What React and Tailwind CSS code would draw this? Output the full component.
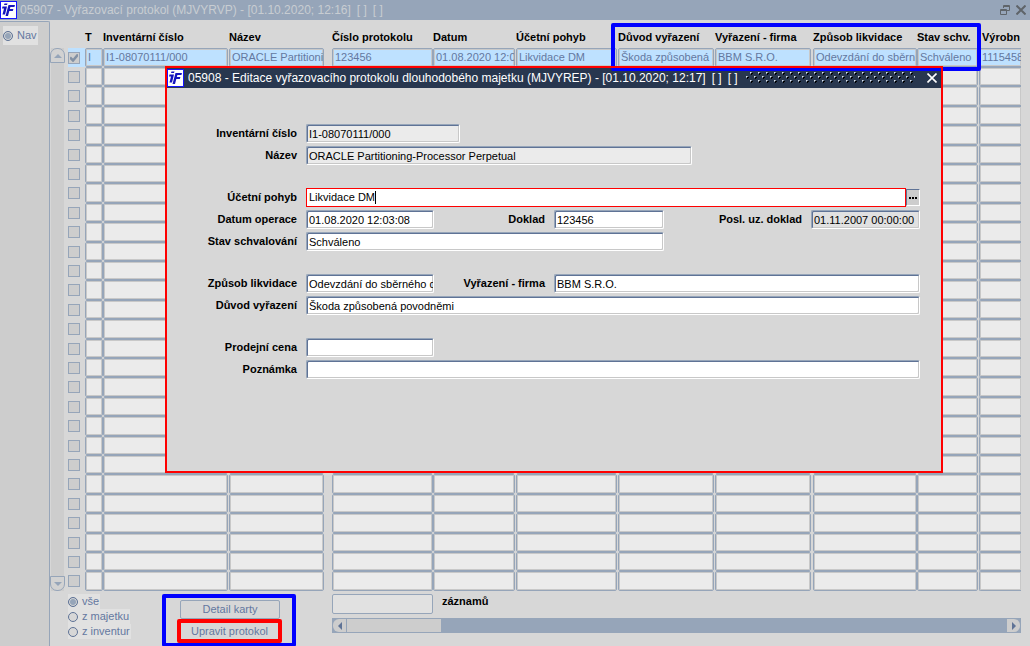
import clsx from "clsx";

const COLUMNS = [
  { key: "t", title: "T", value: "I", col: "w-[18px]", pad: "" },
  { key: "inv", title: "Inventární číslo", value: "I1-08070111/000", col: "w-[126px]", pad: "pr-px" },
  { key: "name", title: "Název", value: "ORACLE Partitionin", col: "w-[103px]", pad: "pr-2" },
  { key: "protocol", title: "Číslo protokolu", value: "123456", col: "w-[101px]", pad: "" },
  { key: "date", title: "Datum", value: "01.08.2020 12:0", col: "w-[83px]", pad: "pr-px" },
  { key: "move", title: "Účetní pohyb", value: "Likvidace DM", col: "w-[102px]", pad: "pr-px" },
  { key: "reason", title: "Důvod vyřazení", value: "Škoda způsobená", col: "w-[97px]", pad: "pr-px" },
  { key: "company", title: "Vyřazení - firma", value: "BBM S.R.O.", col: "w-[98px]", pad: "pr-0.5" },
  { key: "method", title: "Způsob likvidace", value: "Odevzdání do sběrn", col: "w-[104px]", pad: "" },
  { key: "state", title: "Stav schv.", value: "Schváleno", col: "w-[62px]", pad: "pr-px" },
  { key: "serial", title: "Výrobn", value: "1115458", col: "", pad: "" },
];

const ROWS = Array.from({ length: 28 }, (_, i) => i);
const FILTERS = ["vše", "z majetku", "z inventur"];

function Logo() {
  return (
    <svg viewBox="0 0 17 18" className="h-[18px] w-[17px] shrink-0" aria-hidden="true">
      <rect x="0.5" y="0.5" width="16" height="17" fill="#fff" stroke="#1414ff" />
      <path d="M2.5 5.5H7L5 13.5H2.5L4 7.5H2zM4.5 2.5h3L7 4H4z" fill="#1414be" />
      <path d="M8.5 4H15l-.6 2h-4l-.6 2h3.6l-.6 2H9.3l-1.3 5H5.5z" fill="#1414be" />
    </svg>
  );
}

function TitleBar() {
  return (
    <header className="flex h-5 items-center bg-[#96a5b9] pr-1 text-[#c8cdd2]">
      <Logo />
      <h1 className="ml-[3px] flex-1 text-xs">
        05907 - Vyřazovací protokol (MJVYRVP) - [01.10.2020; 12:16]
        <span className="ml-1.5">[ ]</span>
        <span className="ml-1.5">[ ]</span>
      </h1>
      <button aria-label="Obnovit" className="mr-[6px]">
        <svg viewBox="0 0 10 10" className="size-[10px]" fill="none" stroke="#5f6469">
          <path d="M3.5 3V.5h6v5H7M3 1.5h7M.5 4.5h6v5h-6zM0 5.5h7" />
        </svg>
      </button>
      <button aria-label="Zavřít">
        <svg viewBox="0 0 10 10" className="size-[10px]" stroke="#5f6469" strokeWidth="2">
          <path d="M.5.5l9 9M9.5.5l-9 9" />
        </svg>
      </button>
    </header>
  );
}

function Radio({ name, label, checked, className }) {
  return (
    <label className={clsx("flex w-fit items-center gap-1 bg-[#e1e1e1] pr-px text-[#6478a0]", className)}>
      <input
        type="radio"
        name={name}
        defaultChecked={checked}
        className="size-[10px] appearance-none rounded-full border border-[#5f7396] bg-[#d7d7d7] checked:bg-[#96a5b9] checked:shadow-[inset_0_0_0_1px_#d7d7d7]"
      />
      {label}
    </label>
  );
}

function VerticalScroll() {
  return (
    <div className="mt-[27px] flex h-[543px] w-[15px] shrink-0 flex-col border-x border-transparent bg-[#cdcdcd] bg-clip-padding">
      <button
        aria-label="Nahoru"
        className="-mx-px flex h-[15px] items-center justify-center rounded-t-[7px] border border-[#96a5b9] bg-[#d2d2d2]"
      >
        <svg viewBox="0 0 8 4" className="h-1 w-2" fill="#96a5b9">
          <path d="M0 4l4-4 4 4z" />
        </svg>
      </button>
      <div className="flex-1" />
      <button
        aria-label="Dolů"
        className="-mx-px flex h-[15px] items-center justify-center rounded-b-[7px] border border-[#96a5b9] bg-[#d2d2d2]"
      >
        <svg viewBox="0 0 8 4" className="h-1 w-2" fill="#96a5b9">
          <path d="M0 0l4 4 4-4z" />
        </svg>
      </button>
    </div>
  );
}

function HorizontalScroll() {
  return (
    <div className="flex h-[15px] border border-[#96a5b9] bg-[#96a5b9]">
      <button aria-label="Vlevo" className="flex w-[13px] items-center justify-center rounded-l-[6px] bg-[#cdcdcd]">
        <svg viewBox="0 0 4 8" className="h-2 w-1" fill="#5f7396">
          <path d="M4 0v8L0 4z" />
        </svg>
      </button>
      <div className="ml-px w-[94px] bg-[#cdcdcd]" />
      <div className="flex-1" />
      <button aria-label="Vpravo" className="flex w-[13px] items-center justify-center rounded-r-[6px] bg-[#cdcdcd]">
        <svg viewBox="0 0 4 8" className="h-2 w-1" fill="#5f7396">
          <path d="M0 0v8l4-4z" />
        </svg>
      </button>
    </div>
  );
}

function RecordTable() {
  return (
    <table className="w-full table-fixed border-collapse">
      <colgroup>
        <col className="w-[20px]" />
        {COLUMNS.map((c) => (
          <col key={c.key} className={c.col} />
        ))}
      </colgroup>
      <thead>
        <tr className="h-[27px]">
          <th className="p-0" aria-label="Výběr" />
          {COLUMNS.map((c) => (
            <th key={c.key} className="p-0 pt-1.5 text-left align-middle font-bold whitespace-nowrap">
              <span className={clsx(c.key === "serial" && "ml-[3px]")}>{c.title}</span>
            </th>
          ))}
        </tr>
      </thead>
      <tbody>
        {ROWS.map((i) => {
          // 19px and 20px rows alternate so that the grid keeps its 19.4px pitch
          const height = i % 5 === 2 || i % 5 === 4 ? "h-5" : "h-[19px]";
          return (
            <tr key={i} className={height}>
              <td className="p-0 pl-[3px]">
                <div className={clsx("flex items-center", height, i === 0 && "bg-[#bee1ff]")}>
                  <input
                    type="checkbox"
                    aria-label={`Záznam ${i + 1}`}
                    defaultChecked={i === 0}
                    className="size-3 appearance-none border border-[#96a5b9] bg-[#cdcdcd]"
                  />
                  {i === 0 && (
                    <svg
                      viewBox="0 0 8 8"
                      className="pointer-events-none -ml-[10px] size-2"
                      fill="none"
                      stroke="#8291a5"
                      strokeWidth="2.5"
                    >
                      <path d="M0 3.5l3 3L8 .5" />
                    </svg>
                  )}
                </div>
              </td>
              {COLUMNS.map((c) => (
                <td key={c.key} className={clsx("p-0", c.pad)}>
                  <div
                    className={clsx(
                      "overflow-hidden rounded-[2px] border border-[#96a5b9] pl-[2px] leading-[17px] whitespace-nowrap text-[#6478a0] shadow-[inset_0_0_0_1px_#c8c8c8]",
                      height,
                      i === 0 ? "bg-[#bee1ff]" : "bg-[#ebebeb]",
                      c.key === "serial" && "rounded-r-none border-r-0",
                    )}
                  >
                    {i === 0 && c.value}
                  </div>
                </td>
              ))}
            </tr>
          );
        })}
      </tbody>
    </table>
  );
}

function Field({ id, label, value, labelWidth = "w-[122px]", width = "w-[128px]", bg = "bg-white" }) {
  return (
    <>
      <label htmlFor={id} className={clsx("shrink-0 pr-[9px] text-right font-bold", labelWidth)}>
        {label}
      </label>
      <input
        id={id}
        defaultValue={value}
        className={clsx(
          "h-[19px] min-w-0 rounded-[2px] border border-t-[#96a5b9] border-r-white border-b-white border-l-[#96a5b9] pl-[2px] shadow-[inset_1px_1px_0_#5f7396,inset_-1px_-1px_0_#c8c8c8] outline-none",
          width,
          bg,
        )}
      />
    </>
  );
}

function Row({ children }) {
  return <div className="flex h-[19px] items-center">{children}</div>;
}

function EditDialog() {
  return (
    <section
      role="dialog"
      aria-labelledby="dialog-title"
      className="absolute top-[66px] left-[165px] z-10 w-[778px] bg-[#d7d7d7] p-0.5"
    >
      <div className="flex h-5 items-center bg-[#28374f] pr-1 text-white">
        <Logo />
        <h2 id="dialog-title" className="ml-1 shrink-0 text-xs">
          05908 - Editace vyřazovacího protokolu dlouhodobého majetku (MJVYREP) - [01.10.2020; 12:17]
          <span className="ml-1.5">[ ]</span>
          <span className="ml-1.5">[ ]</span>
        </h2>
        <svg className="mx-2 h-3 min-w-0 flex-1" aria-hidden="true">
          <defs>
            <pattern id="grip" width="8" height="8" patternUnits="userSpaceOnUse">
              <path d="M4 0h2v1h-1v1h-1zM0 4h2v1h-1v1h-1z" fill="#8c9baf" />
              <path d="M4 0h1v1h-1zM0 4h1v1h-1z" fill="#dce1e6" />
              <path d="M5 1h2v1h-1v1h-1zM1 5h2v1h-1v1h-1z" fill="#000" />
            </pattern>
          </defs>
          <rect width="100%" height="100%" fill="url(#grip)" />
        </svg>
        <button aria-label="Zavřít" className="ml-1">
          <svg viewBox="0 0 10 10" className="size-[10px]" stroke="#fff" strokeWidth="1.6">
            <path d="M.5.5l9 9M9.5.5l-9 9" />
          </svg>
        </button>
      </div>
      <form className="flex flex-col gap-[23px] pt-9 pr-[21px] pb-[92px] pl-[17px]">
        <div className="flex flex-col gap-[3px]">
          <Row>
            <Field id="inv" label="Inventární číslo" value="I1-08070111/000" width="w-[154px]" bg="bg-[#ebebeb]" />
          </Row>
          <Row>
            <Field id="name" label="Název" value="ORACLE Partitioning-Processor Perpetual" width="w-[386px]" bg="bg-[#ebebeb]" />
          </Row>
        </div>
        <div className="flex flex-col gap-[3px]">
          <Row>
            <label htmlFor="move" className="w-[122px] shrink-0 pr-[9px] text-right font-bold">
              Účetní pohyb
            </label>
            <div className="flex h-[19px] min-w-0 flex-1 items-center border border-[#ff0000] bg-white pl-[2px]">
              <input id="move" defaultValue="Likvidace DM" className="field-sizing-content outline-none" />
              <span className="h-[13px] w-px bg-black" />
            </div>
            <button
              type="button"
              aria-label="Seznam hodnot"
              className="flex h-[17px] w-[14px] items-center justify-center gap-px border border-t-[#5f7396] border-r-white border-b-white border-l-[#5f7396] bg-[#cdcdcd]"
            >
              <span className="size-0.5 bg-black" />
              <span className="size-0.5 bg-black" />
              <span className="size-0.5 bg-black" />
            </button>
          </Row>
          <Row>
            <Field id="date" label="Datum operace" value="01.08.2020 12:03:08" />
            <Field id="doc" label="Doklad" value="123456" labelWidth="w-[120px]" width="w-[110px]" />
            <Field id="last" label="Posl. uz. doklad" value="01.11.2007 00:00:00" labelWidth="w-[147px]" width="flex-1" bg="bg-[#e1e1e1]" />
          </Row>
          <Row>
            <Field id="state" label="Stav schvalování" value="Schváleno" width="w-[358px]" />
          </Row>
        </div>
        <div className="flex flex-col gap-[3px]">
          <Row>
            <Field id="method" label="Způsob likvidace" value="Odevzdání do sběrného dvora" />
            <Field id="company" label="Vyřazení - firma" value="BBM S.R.O." labelWidth="w-[120px]" width="flex-1" />
          </Row>
          <Row>
            <Field id="reason" label="Důvod vyřazení" value="Škoda způsobená povodněmi" width="flex-1" />
          </Row>
        </div>
        <div className="flex flex-col gap-[3px]">
          <Row>
            <Field id="price" label="Prodejní cena" value="" />
          </Row>
          <Row>
            <Field id="note" label="Poznámka" value="" width="flex-1" />
          </Row>
        </div>
      </form>
    </section>
  );
}

function Footer() {
  return (
    <footer className="flex items-start pl-[3px]">
      <fieldset className="mt-[3px] w-[94px] shrink-0">
        {FILTERS.map((label, i) => (
          <Radio key={label} name="filter" label={label} checked={i === 0} />
        ))}
      </fieldset>
      <div className="mt-[3px] w-[134px] shrink-0 rounded-[2px] border-4 border-[#0000ff] pt-0.5 pl-[11px]">
        <button className="ml-[3px] flex h-[19px] w-[100px] items-center justify-center rounded-[2px] border border-[#96a5b9] text-[#6478a0]">
          Detail karty
        </button>
        <div className="w-[105px] rounded-[2px] border-4 border-[#ff0000]">
          <button className="flex h-4 w-full items-center justify-center text-[#6478a0]">Upravit protokol</button>
        </div>
      </div>
      <div className="mt-[3px] ml-9 min-w-0 flex-1">
        <div className="mb-1 flex">
          <input id="count" className="h-5 w-[101px] rounded-[2px] border border-[#96a5b9] bg-[#e1e1e1] px-1" />
          <label htmlFor="count" className="ml-[9px] font-bold">
            záznamů
          </label>
        </div>
        <HorizontalScroll />
      </div>
    </footer>
  );
}

export default function App() {
  return (
    <div className="relative flex min-h-screen flex-col overflow-hidden bg-[#d7d7d7] font-['Liberation_Sans',Arial,sans-serif] text-[11px] leading-[15px] text-black">
      <TitleBar />
      <div className="flex flex-1">
        <nav className="mt-px w-[50px] shrink-0 rounded-tr-[2px] border-t border-r border-[#96a5b9] bg-[#cdcdcd] pt-1 pl-[3px]">
          <Radio name="nav" label="Nav" checked className="h-[19px]" />
        </nav>
        <main className="min-w-0 flex-1 pr-[9px]">
          <div className="flex pt-px">
            <VerticalScroll />
            <div className="min-w-0 flex-1">
              <RecordTable />
            </div>
          </div>
          <div className="pl-[15px]">
            <Footer />
          </div>
        </main>
      </div>
      <EditDialog />
      <div className="pointer-events-none absolute top-[23px] left-[611px] z-20 h-12 w-[370px] rounded-[2px] border-4 border-[#0000ff]" />
      <div className="pointer-events-none absolute top-[66px] left-[165px] z-30 h-[407px] w-[778px] border-2 border-[#ff0000]" />
    </div>
  );
}
